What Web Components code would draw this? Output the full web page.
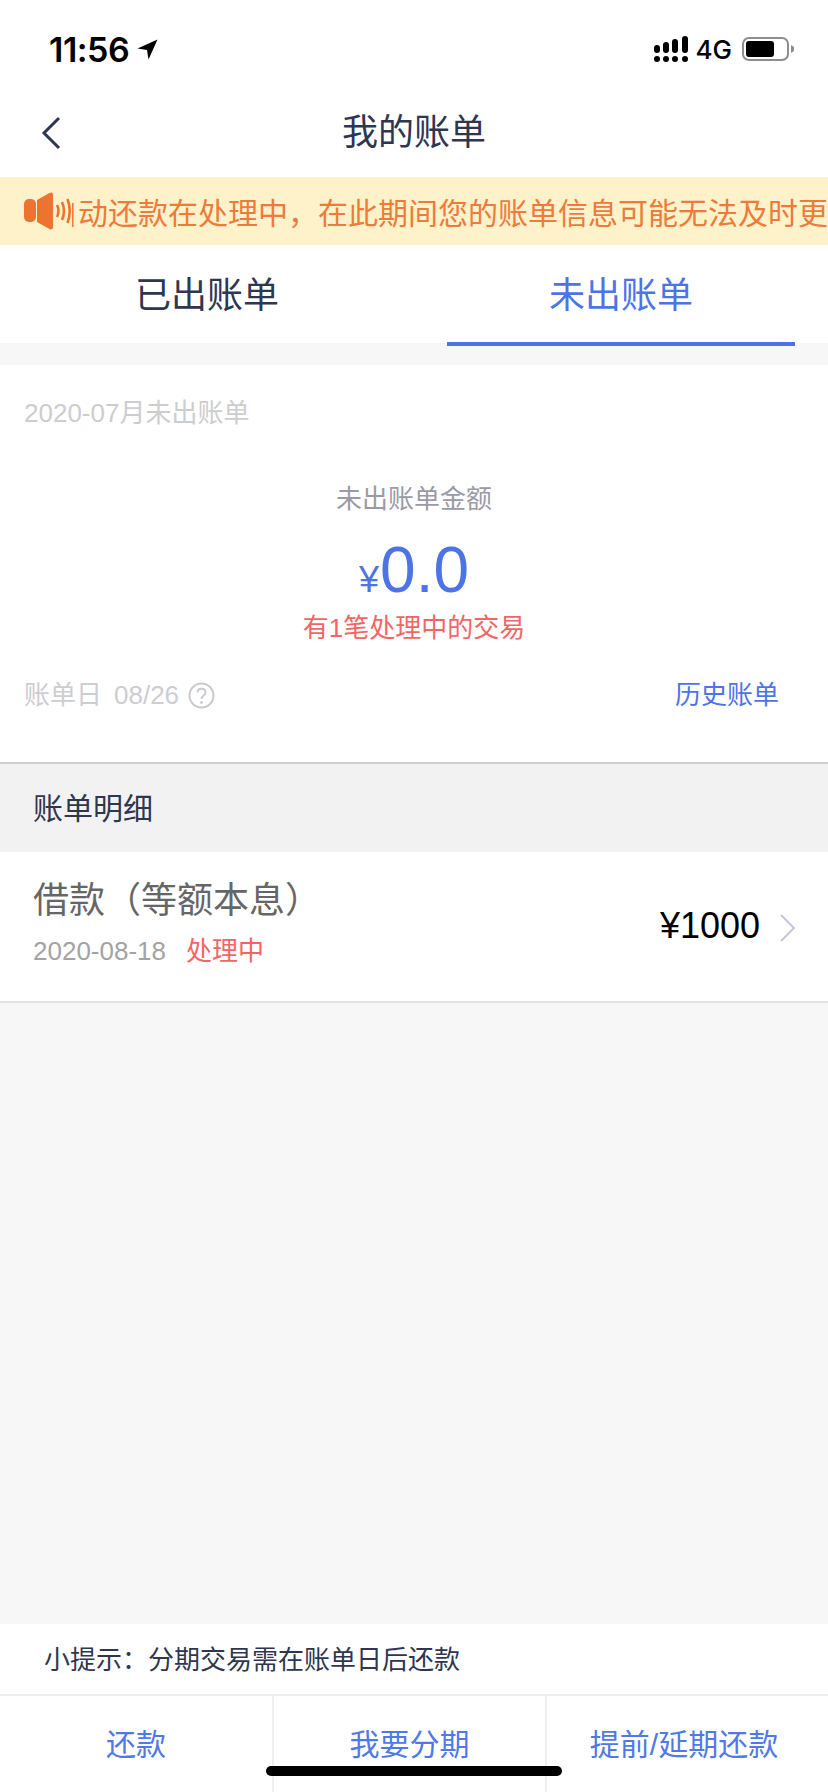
<!DOCTYPE html>
<html lang="zh">
<head>
<meta charset="utf-8">
<title>我的账单</title>
<style>
  html, body { margin: 0; padding: 0; }
  body {
    width: 828px;
    height: 1792px;
    overflow: hidden;
    display: flex;
    flex-direction: column;
    background: #f7f7f7;
    font-family: "Liberation Sans", "Noto Sans CJK SC", sans-serif;
    font-weight: 400;
  }
</style>
</head>
<body>
<status-bar time="11:56"></status-bar>
<nav-bar>我的账单</nav-bar>
<notice-bar>自动还款在处理中，在此期间您的账单信息可能无法及时更新</notice-bar>
<bill-tabs></bill-tabs>
<bill-summary></bill-summary>
<section-title>账单明细</section-title>
<bill-row date="2020-08-18" state="处理中" amount="¥1000">借款（等额本息）</bill-row>
<bill-spacer></bill-spacer>
<tip-bar>小提示：分期交易需在账单日后还款</tip-bar>
<action-bar></action-bar>
<home-indicator></home-indicator>

<script>
// small helper so every component looks the same
class BaseEl extends HTMLElement {
  constructor() {
    super();
    this.attachShadow({ mode: "open" });
    this.shadowRoot.innerHTML = this.render();
  }
  render() { return "<slot></slot>"; }
}

class StatusBar extends BaseEl {
  render() {
    return `
    <style>
      :host { display: flex; height: 88px; box-sizing: border-box; padding: 0 34px 0 49px; align-items: center; justify-content: space-between; background: #fff; color: #000; }
      .left, .right { display: flex; align-items: center; }
      .time { font: 600 34px Inter, sans-serif; letter-spacing: -0.5px; margin-top: 10px; }
      .left svg { margin: 10px 0 0 8px; }
      .right { margin-top: 10px; }
      .net { font: 500 26px Inter, sans-serif; margin: 0 10px 0 8px; }
    </style>
    <div class="left">
      <span class="time">${this.getAttribute("time")}</span>
      <svg width="21" height="21" viewBox="0 0 21 21"><path d="M20.5 .5 L.5 9.5 L10 11 L11.5 20.5 Z" fill="#000"/></svg>
    </div>
    <div class="right">
      <svg width="34" height="26" viewBox="0 0 34 26" fill="#000">
        <rect x="0" y="9" width="6" height="8" rx="3"/><rect x="9" y="6" width="6" height="11" rx="3"/><rect x="18" y="3" width="6" height="14" rx="3"/><rect x="28" y="0" width="6" height="17" rx="3"/>
        <circle cx="3" cy="23" r="3"/><circle cx="12" cy="23" r="3"/><circle cx="21" cy="23" r="3"/><circle cx="31" cy="23" r="3"/>
      </svg>
      <span class="net">4G</span>
      <svg width="52" height="24" viewBox="0 0 52 24">
        <rect x="1" y="1" width="45" height="22" rx="6" fill="none" stroke="#8e8e8e" stroke-width="2"/>
        <rect x="4" y="4" width="28" height="16" rx="3" fill="#000"/>
        <path d="M49 8 L52 10 V14 L49 16 Z" fill="#8e8e8e"/>
      </svg>
    </div>`;
  }
}

class NavBar extends BaseEl {
  render() {
    return `
    <style>
      :host { display: flex; position: relative; height: 89px; box-sizing: border-box; padding-bottom: 7px; align-items: center; justify-content: center; background: #fff; color: #2f3650; font-size: 36px; }
      svg { position: absolute; left: 41px; top: 28px; }
    </style>
    <svg width="20" height="34" viewBox="0 0 20 34"><path d="M18 2 L3 17 L18 32" fill="none" stroke="#2f3650" stroke-width="3"/></svg>
    <slot></slot>`;
  }
}

class NoticeBar extends BaseEl {
  render() {
    return `
    <style>
      :host { display: flex; height: 68px; align-items: center; box-sizing: border-box; padding-left: 24px; background: #fdf2c9; color: #ee7a3b; font-size: 30px; overflow: hidden; }
      svg { flex: none; }
      .clip { flex: 1; min-width: 0; overflow: hidden; white-space: nowrap; }
      .run { display: inline-block; margin-left: -24px; }
    </style>
    <svg width="48" height="38" viewBox="0 0 48 38">
      <rect x="0" y="7" width="12" height="23" rx="5" fill="#ec7430"/>
      <path d="M13 8 L25 1.2 Q29 -.8 29 3 V35 Q29 38.8 25 36.8 L13 30 Z" fill="#ec7430"/>
      <g fill="none" stroke="#ec7430" stroke-width="2.6">
        <path d="M33 13 Q36 19 33 25"/><path d="M38 10 Q42 19 38 28"/><path d="M43.5 7 Q48 19 43.5 31"/>
      </g>
    </svg>
    <div class="clip"><span class="run"><slot></slot></span></div>`;
  }
}

class BillTabs extends BaseEl {
  render() {
    return `
    <style>
      :host { display: flex; height: 98px; background: #fff; color: #2f3650; font-size: 36px; position: relative; }
      div { flex: 1; display: flex; align-items: center; justify-content: center; padding-bottom: 5px; }
      .on { color: #4d74e6; position: relative; }
      .on::after { content: ""; position: absolute; left: 33px; right: 33px; bottom: -3px; height: 4px; background: #4d74e6; }
    </style>
    <div>已出账单</div>
    <div class="on">未出账单</div>`;
  }
}

class BillSummary extends BaseEl {
  render() {
    return `
    <style>
      :host { display: flex; flex-direction: column; height: 399px; box-sizing: border-box; margin-top: 22px; padding: 31px 24px 0; background: #fff; border-bottom: 2px solid #cfcfcf; font-size: 26px; line-height: 34px; }
      .month { color: #cdcdcd; }
      .center { display: flex; flex-direction: column; align-items: center; margin-top: 52px; }
      .label { color: #9a9aa6; }
      .amount { color: #4d74e6; font-size: 64px; line-height: 74px; margin-top: 17px; display: flex; align-items: baseline; }
      .amount small { font-size: 36px; margin-right: 1px; }
      .warn { color: #f56464; margin-top: -6px; }
      .foot { display: flex; justify-content: space-between; align-items: center; margin-top: 33px; padding-right: 25px; color: #cdcdd2; }
      .foot span { display: flex; align-items: center; }
      .date { margin-left: 12px; margin-right: 9px; }
      .link { color: #4d74e6; }
    </style>
    <div class="month">2020-07月未出账单</div>
    <div class="center">
      <div class="label">未出账单金额</div>
      <div class="amount"><small>¥</small>0.0</div>
      <div class="warn">有1笔处理中的交易</div>
    </div>
    <div class="foot">
      <span>账单日<span class="date">08/26</span>
        <svg width="27" height="27" viewBox="0 0 27 27"><circle cx="13.5" cy="13.5" r="12" fill="none" stroke="#c9c9d0" stroke-width="2"/><path d="M9.5 10.5 C9.5 5.5 17.5 5.5 17.5 10.5 C17.5 13.5 13.5 13.5 13.5 17" fill="none" stroke="#c9c9d0" stroke-width="2"/><circle cx="13.5" cy="20.5" r="1.4" fill="#c9c9d0"/></svg>
      </span>
      <span class="link">历史账单</span>
    </div>`;
  }
}

class SectionTitle extends BaseEl {
  render() {
    return `
    <style>
      :host { display: flex; height: 88px; align-items: center; box-sizing: border-box; padding: 0 0 4px 33px; background: #f2f2f2; color: #2f3650; font-size: 30px; }
    </style>
    <slot></slot>`;
  }
}

class BillRow extends BaseEl {
  render() {
    return `
    <style>
      :host { display: flex; height: 151px; box-sizing: border-box; padding: 0 32px 0 33px; align-items: center; justify-content: space-between; background: #fff; border-bottom: 2px solid #e2e2e2; }
      .title { color: #666; font-size: 36px; line-height: 48px; margin-top: -9px; }
      .sub { display: flex; gap: 20px; margin-top: 9px; font-size: 26px; line-height: 34px; color: #a3a3a3; }
      .state { color: #f56464; }
      .right { display: flex; align-items: center; gap: 19px; color: #000; font-size: 36px; margin-top: -1px; }
      .right svg { margin-top: 4px; }
    </style>
    <div>
      <div class="title"><slot></slot></div>
      <div class="sub"><span>${this.getAttribute("date")}</span><span class="state">${this.getAttribute("state")}</span></div>
    </div>
    <div class="right">
      <span>${this.getAttribute("amount")}</span>
      <svg width="17" height="30" viewBox="0 0 17 30"><path d="M2 2 L15 15 L2 28" fill="none" stroke="#c4c4d0" stroke-width="1.8"/></svg>
    </div>`;
  }
}

class BillSpacer extends BaseEl {
  render() {
    return `<style>:host { display: block; flex: 1; background: #f7f7f7; }</style>`;
  }
}

class TipBar extends BaseEl {
  render() {
    return `
    <style>
      :host { display: flex; height: 70px; align-items: center; box-sizing: border-box; padding: 0 0 4px 44px; background: #fff; color: #2f3650; font-size: 26px; }
    </style>
    <slot></slot>`;
  }
}

class ActionBar extends BaseEl {
  render() {
    return `
    <style>
      :host { display: grid; grid-template-columns: 272px 273px 1fr; height: 98px; box-sizing: border-box; background: #fff; border-top: 2px solid #efefef; color: #5078e8; font-size: 30px; }
      div { display: flex; justify-content: center; padding-top: 31px; line-height: 36px; border-left: 2px solid #efefef; }
      div.first { border-left: 0; }
      div.last { padding-right: 7px; }
    </style>
    <div class="first">还款</div>
    <div>我要分期</div>
    <div class="last">提前/延期还款</div>`;
  }
}

class HomeIndicator extends BaseEl {
  render() {
    return `
    <style>
      :host { position: absolute; left: 266px; top: 1766px; width: 296px; height: 10px; border-radius: 5px; background: #000; }
    </style>`;
  }
}

customElements.define("status-bar", StatusBar);
customElements.define("nav-bar", NavBar);
customElements.define("notice-bar", NoticeBar);
customElements.define("bill-tabs", BillTabs);
customElements.define("bill-summary", BillSummary);
customElements.define("section-title", SectionTitle);
customElements.define("bill-row", BillRow);
customElements.define("bill-spacer", BillSpacer);
customElements.define("tip-bar", TipBar);
customElements.define("action-bar", ActionBar);
customElements.define("home-indicator", HomeIndicator);
</script>
</body>
</html>
